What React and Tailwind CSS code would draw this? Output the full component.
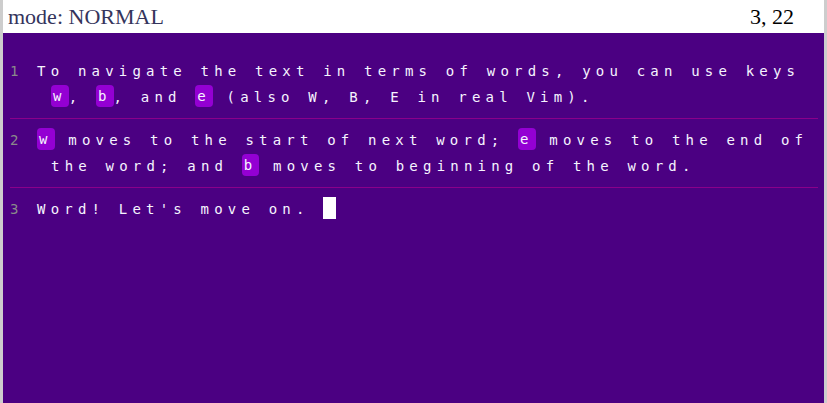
const mono = { fontFamily: '"DejaVu Sans Mono", "Liberation Mono", monospace' }

function Key({ children }) {
  return (
    <span className="relative -top-px bg-[#9400d3] rounded-[4px] px-[2px] py-[3px]">{children}</span>
  )
}

function Line({ num, last, children }) {
  return (
    <div className={`flex py-2 ${last ? '' : 'border-b border-[#8b008b]'}`}>
      <span className="w-[27px] shrink-0 text-[#8a8a8a]">{num}</span>
      <div className="flex-1 pl-[14px] indent-[-14px] tracking-[5.2px] text-[#f6f4ff]">{children}</div>
    </div>
  )
}

export default function App() {
  return (
    <div className="h-screen bg-[#cdcdcd] px-[3px] flex flex-col">
      <header
        className="h-[33px] bg-white flex items-center justify-between pl-[5px] pr-[30px] text-[22px]"
        style={{ fontFamily: '"Liberation Serif", serif' }}
      >
        <span className="text-[#34345c]">mode: NORMAL</span>
        <span className="text-black">3, 22</span>
      </header>
      <main className="flex-1 bg-[#4b0082] pt-[17px] pl-[7px] pr-[6px] text-[14px] leading-[26px]" style={mono}>
        <Line num="1">
          To navigate the text in terms of words, you can use keys <Key>w</Key>, <Key>b</Key>, and <Key>e</Key> (also W, B, E in real Vim).
        </Line>
        <Line num="2">
          <Key>w</Key> moves to the start of next word; <Key>e</Key> moves to the end of the word; and <Key>b</Key> moves to beginning of the word.
        </Line>
        <Line num="3" last>
          Word! Let's move on. <span className="inline-block w-[13px] h-[22px] bg-white align-[-5px]"></span>
        </Line>
      </main>
    </div>
  )
}
